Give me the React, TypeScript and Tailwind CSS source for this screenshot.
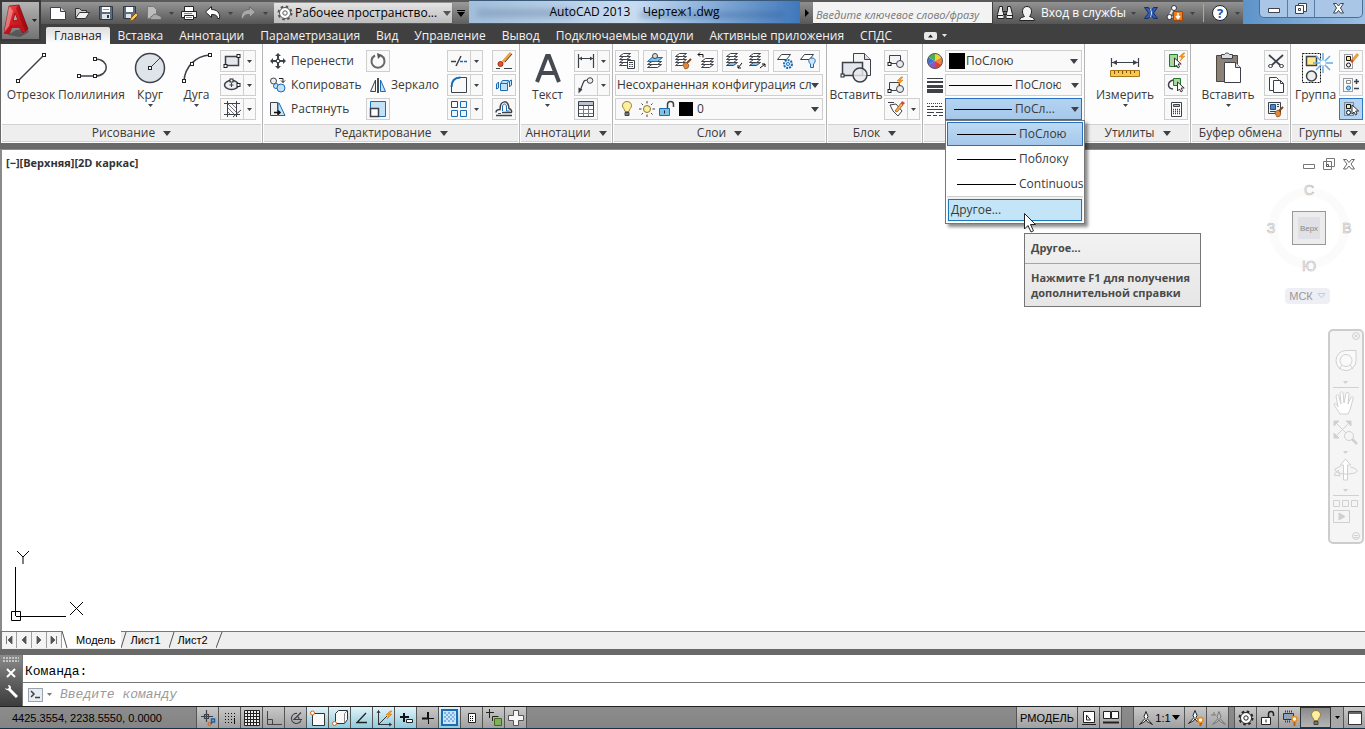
import React, { useState } from "react";

const INK = "#3d4149";
const BLUE = "#1a6cb5";
const SKY = "#c3e2f5";

type Kids = { children?: React.ReactNode };

function Icon({ w = 18, h, children }: Kids & { w?: number; h?: number }) {
  return (
    <svg
      width={w}
      height={h ?? w}
      viewBox={`0 0 ${w} ${h ?? w}`}
      fill="none"
      stroke={INK}
      strokeWidth="1"
      aria-hidden="true"
      className="shrink-0"
    >
      {children}
    </svg>
  );
}

function Arrow({ big, color = "#3d4149" }: { big?: boolean; color?: string }) {
  return big ? (
    <svg width="8" height="5" viewBox="0 0 8 5" className="shrink-0" aria-hidden="true">
      <path d="M0 0h8L4 5z" fill={color} />
    </svg>
  ) : (
    <svg width="5" height="3" viewBox="0 0 5 3" className="shrink-0" aria-hidden="true">
      <path d="M0 0h5L2.500 3z" fill={color} />
    </svg>
  );
}

function Node({ x, y }: { x: number; y: number }) {
  return <rect x={x - 1.5} y={y - 1.5} width="3" height="3" fill="#fff" stroke="#222" />;
}

/* ---------- ribbon building blocks ---------- */

function Panel({ title, width, children, arrow = true }: Kids & { title: string; width: string; arrow?: boolean }) {
  return (
    <section className={`flex shrink-0 flex-col border-r border-[#b4b4b4] pr-px pl-px ${width}`}>
      <div className="flex h-20 pt-[6px]">{children}</div>
      <div className="mb-px flex h-[18px] items-center justify-center gap-2 border-t border-b border-[#d2d2d2] bg-[#eeeeee]">
        <span>{title}</span>
        {arrow && title && <Arrow big />}
      </div>
    </section>
  );
}

function Big({ label, width, arrow, children }: Kids & { label: string; width: string; arrow?: boolean }) {
  return (
    <button className={`flex shrink-0 flex-col items-center ${width}`}>
      <span className="flex h-9 items-center">{children}</span>
      <span className="h-[18px] leading-[18px]">{label}</span>
      {arrow && <Arrow />}
    </button>
  );
}

function Tool({ label, on, children }: Kids & { label: string; on?: boolean }) {
  return (
    <button
      aria-label={label}
      className={`flex h-[22px] w-6 shrink-0 items-center justify-center border ${
        on ? "border-[#2f7ac8] bg-[#b5d5f3]" : "border-[#cfcfcf] bg-[#f9f9f9]"
      }`}
    >
      {children}
    </button>
  );
}

function Split({ label, children }: Kids & { label: string }) {
  return (
    <div className="flex h-[22px] shrink-0">
      <Tool label={label}>{children}</Tool>
      <button
        aria-label={`${label} ▾`}
        className="flex w-3 items-center justify-center border border-l-0 border-[#cfcfcf] bg-[#f9f9f9]"
      >
        <Arrow />
      </button>
    </div>
  );
}

function Pair({ children }: Kids) {
  return <div className="flex h-[22px] w-[47px] items-center justify-around border border-[#cfcfcf] bg-[#f9f9f9]">{children}</div>;
}

function Flat({ label, children }: Kids & { label: string }) {
  return (
    <button aria-label={label} className="flex items-center justify-center">
      {children}
    </button>
  );
}

function Row({ label, children }: Kids & { label: string }) {
  return (
    <button className="flex h-[22px] items-center gap-[5px] whitespace-nowrap">
      {children}
      <span>{label}</span>
    </button>
  );
}

function Stack({ children, className = "" }: Kids & { className?: string }) {
  return <div className={`flex shrink-0 flex-col gap-[2px] ${className}`}>{children}</div>;
}

/* ---------- small drawings ---------- */

function Layers({ tint = "#fff" }: { tint?: string }) {
  return (
    <>
      <path d="M1.500 13.500h7l4-3h-7z" fill={tint} />
      <path d="M1.500 10.500h7l4-3h-7z" fill="#fff" />
      <path d="M1.500 7.500h7l4-3h-7z" fill="#fff" />
      <path d="M1.500 4.500h7l4-3h-7z" fill="#fff" />
    </>
  );
}

function Bolt({ x, y }: { x: number; y: number }) {
  return <path d={`M${x + 4} ${y}l-4 4h3l-2 4 5-5h-3l3-3z`} fill="#f8a21c" stroke="#d96f0a" strokeWidth=".5" />;
}

function Brush({ x, y }: { x: number; y: number }) {
  return (
    <>
      <path d={`M${x + 8} ${y}l-4 4`} stroke="#7b4a22" strokeWidth="2" />
      <path d={`M${x} ${y + 5}l3-2 3 3-1 3-3 1c-1-2-2-3-2-5z`} fill="#e2873a" stroke="#8a4512" strokeWidth=".7" />
    </>
  );
}

function Pointer({ x, y }: { x: number; y: number }) {
  return <path d={`M${x} ${y}v9l2-2 1.500 3 1.500-1-1.300-3h3z`} fill="#fff" stroke="#222" strokeWidth=".9" />;
}

function Bulb({ x, y }: { x: number; y: number }) {
  return (
    <>
      <path
        d={`M${x + 5} ${y}c-3 0-4.500 2-4.500 4.300 0 2.200 2.300 3.200 2.500 5.700h4c.2-2.500 2.500-3.500 2.500-5.700C${x + 9.5} ${y + 2} ${x + 8} ${y} ${x + 5} ${y}z`}
        fill="#ffefa0"
        stroke="#98803a"
      />
      <path d={`M${x + 3} ${y + 11}h4v3h-4z`} fill="#777" stroke="#444" />
    </>
  );
}

function Gear({ color = "#3d4149", fill = "none" }: { color?: string; fill?: string }) {
  return (
    <>
      <circle cx="8" cy="8" r="6.500" stroke={color} strokeWidth="2" strokeDasharray="2.550 2.550" />
      <circle cx="8" cy="8" r="5.500" fill={fill} stroke={color} />
      <circle cx="8" cy="8" r="2.200" stroke={color} />
    </>
  );
}

function Logo() {
  return (
    <svg width="25" height="33" viewBox="0 0 25 33" className="shrink-0" aria-hidden="true">
      <defs>
        <linearGradient id="logoRed" x1="0" y1="0" x2="1" y2="1">
          <stop offset="0" stopColor="#f06a6a" />
          <stop offset=".4" stopColor="#dd1f26" />
          <stop offset="1" stopColor="#a50912" />
        </linearGradient>
      </defs>
      <path d="M4 31l8-5 11-1 2 3-9 5z" fill="#333" opacity=".5" />
      <path d="M5 2L15 1l9 24-5 4-4-7-7 1-3 7-5-1z" fill="url(#logoRed)" stroke="#7d0910" strokeWidth=".7" />
      <path d="M5 2l4 5-4 15-5 7z" fill="#f3b4b4" opacity=".55" />
      <path d="M11 9l3 7-5 1z" fill="#b9a6a6" stroke="#8c0d14" strokeWidth=".8" />
      <path d="M0 29l7-8 13 1 4 3-5 4-4-5-8 0-2 6z" fill="#c4121b" />
      <path d="M15 1l9 24-3 2L12 4z" fill="#8f0710" opacity=".55" />
    </svg>
  );
}

/* ---------- title bar ---------- */

function QuickAccess() {
  const cell = "flex h-6 w-6 shrink-0 items-center justify-center";
  const drop = "flex h-6 w-[11px] shrink-0 items-center justify-center";
  return (
    <div className="flex h-6 w-[428px] shrink-0 items-center border-t-2 border-[#5a5a5a] bg-gradient-to-b from-[#959595] to-[#565656] pl-[5px]">
      <button aria-label="Создать" className={cell}>
        <Icon w={18}>
          <path d="M1.500 3.500h10l5 4v8h-15z" fill="#fff" />
          <path d="M11.500 3.500v4h5" fill="#ddd" />
        </Icon>
      </button>
      <button aria-label="Открыть" className={cell}>
        <Icon w={18}>
          <path d="M2.500 14.500v-10h4l2 2h5v2" fill="#cfcfcf" stroke="#333" />
          <path d="M2.500 14.500l4-6h10l-4 6z" fill="#f1f1f1" stroke="#333" />
        </Icon>
      </button>
      <button aria-label="Сохранить" className={cell}>
        <Icon w={16}>
          <path d="M1.500 1.500h13v13h-13z" fill="#5d6b7a" stroke="#2e3a46" />
          <path d="M4 2h8v5H4z" fill="#fff" stroke="none" />
          <path d="M4 9h8v5H4z" fill="#dfe4e8" stroke="none" />
          <path d="M5 4.500h6" stroke="#8a97a5" />
          <path d="M9 10h2v3H9z" fill="#2e3a46" stroke="none" />
        </Icon>
      </button>
      <button aria-label="Сохранить как" className={cell}>
        <Icon w={18}>
          <path d="M2.500 2.500h12v12h-12z" fill="#5d6b7a" stroke="#2e3a46" />
          <path d="M5 3h7v5H5z" fill="#fff" stroke="none" />
          <path d="M5 10h5v4H5z" fill="#dfe4e8" stroke="none" />
          <path d="M9 17l1-3 5-5 2 2-5 5z" fill="#ffc85a" stroke="#8a5a16" />
        </Icon>
      </button>
      <button aria-label="Облако" className={cell}>
        <Icon w={18}>
          <path d="M2.500 2.500h6l3 3v9h-9z" fill="#bdbdbd" stroke="#777" />
          <path d="M6 15.500h10c1-3-1-4-3-4-1-2-5-2-6 1-2 0-2 2-1 3z" fill="#a9a9a9" stroke="#6d6d6d" />
        </Icon>
      </button>
      <span className={drop}>
        <Arrow />
      </span>
      <button aria-label="Печать" className={cell}>
        <Icon w={18}>
          <path d="M4.500 7V2.500h9V7" fill="#fff" stroke="#222" />
          <path d="M1.500 7.500h15v6h-15z" fill="#f1f1f1" stroke="#222" />
          <path d="M4.500 11.500h9v4h-9z" fill="#fff" stroke="#222" />
          <path d="M4 9.500h8M6 13.500h6" stroke="#888" />
        </Icon>
      </button>
      <button aria-label="Отменить" className={cell}>
        <Icon w={18}>
          <path d="M7.500 2.500v3c5 0 9 3 8 9h-2c0-3-2-4-6-4v3l-6-5.500z" fill="#fff" stroke="#222" />
        </Icon>
      </button>
      <span className={drop}>
        <Arrow />
      </span>
      <button aria-label="Повторить" className={cell}>
        <Icon w={18}>
          <path d="M10.500 2.500v3c-5 0-9 3-8 9h2c0-3 2-4 6-4v3l6-5.500z" fill="#a8a8a8" stroke="#6b6b6b" />
        </Icon>
      </button>
      <span className={drop}>
        <Arrow />
      </span>
      <div className="relative ml-[3px] flex h-5 w-[178px] items-center bg-gradient-to-b from-[#e4e4e4] to-[#bdbdbd] pl-[3px]">
        <Icon w={16}>
          <Gear color="#555" fill="#fff" />
        </Icon>
        <select
          aria-label="Рабочее пространство"
          className="h-5 flex-1 appearance-none bg-transparent pl-[2px] leading-5 text-black outline-none"
        >
          <option>Рабочее пространство...</option>
        </select>
        <span className="pointer-events-none absolute right-px">
          <Arrow big color="#555" />
        </span>
      </div>
      <button
        aria-label="Настройка панели"
        className="ml-px flex h-[22px] w-4 flex-col items-center justify-center gap-px bg-gradient-to-b from-[#9a9a9a] to-[#5f5f5f]"
      >
        <span className="h-px w-2 bg-black" />
        <Arrow big color="#000" />
      </button>
    </div>
  );
}

function InfoCenter() {
  return (
    <div className="flex h-6 shrink-0 border-t-2 border-[#5a5a5a]">
      <button
        aria-label="Свернуть поиск"
        className="flex w-[13px] items-center justify-center bg-gradient-to-b from-[#8f8f8f] to-[#585858]"
      >
        <svg width="4" height="8" viewBox="0 0 4 8" aria-hidden="true">
          <path d="M0 0v8l4-4z" />
        </svg>
      </button>
      <input
        aria-label="Поиск"
        placeholder="Введите ключевое слово/фразу"
        className="h-[21px] w-[179px] bg-[#f3f3f3] pt-[3px] pl-[3px] text-[11px] italic outline-none placeholder:text-[#777]"
      />
      <div className="ml-px flex w-[250px] items-center bg-gradient-to-b from-[#939393] to-[#555] pl-[3px] whitespace-nowrap">
        <button aria-label="Найти">
          <Icon w={18}>
            <path d="M3.500 2.500h3v4l1.500 4v4H1.500v-4zM11.500 2.500h3l2 8v4H10v-4l1.500-4z" fill="#eee" stroke="#222" />
            <path d="M7 7.500h4M7 10.500h4M2 11.500h5M11 11.500h5" stroke="#222" />
          </Icon>
        </button>
        <button className="ml-1 flex items-center gap-[5px] text-white">
          <Icon w={18}>
            <path d="M1.500 16.500c0-3 3-3 5-4-3-3-3-10 2.500-10s5.500 7 2.500 10c2 1 5 1 5 4z" fill="#f4f4f4" stroke="#222" />
          </Icon>
          <span>Вход в службы</span>
          <Arrow />
        </button>
        <button aria-label="Exchange" className="ml-[6px]">
          <Icon w={18}>
            <path d="M2.500 3.500h4l2.500 4 2.500-4h4l-4 5.500 4 5.500h-4l-2.500-4-2.500 4h-4l4-5.500z" fill="#2f5db8" stroke="#12306d" />
            <path d="M8 5c2 2 2 6 0 8" stroke="#dfe9fb" />
          </Icon>
        </button>
        <button aria-label="Обновления" className="ml-[6px] flex items-center gap-[6px]">
          <Icon w={18}>
            <path d="M8 3L3 13h7" stroke="#e8e8e8" strokeWidth="2" />
            <circle cx="8" cy="4" r="2.500" fill="#fff" stroke="#334" />
            <circle cx="3.500" cy="13" r="2.500" fill="#fff" stroke="#334" />
            <path d="M7.500 7.500h9v9h-9z" fill="#ee7d1b" stroke="#9c470a" />
            <path d="M12 9v5m-2-2l2 2.500 2-2.500" stroke="#fff" strokeWidth="1.500" />
          </Icon>
          <Arrow />
        </button>
        <span className="ml-2 h-[18px] w-px bg-[#aaa]" />
        <button aria-label="Справка" className="ml-2 flex items-center gap-[7px]">
          <span className="flex h-4 w-4 items-center justify-center rounded-full border border-[#223] bg-white text-[13px] font-bold text-[#1f4fae]">
            ?
          </span>
          <Arrow />
        </button>
      </div>
    </div>
  );
}

function WindowButtons() {
  return (
    <div className="flex h-6 w-[122px] shrink-0 items-start bg-gradient-to-r from-[#5c93c9] to-[#9dc0e4] pl-4">
      <div className="flex h-[18px] w-[104px] rounded-b-[5px] border border-t-0 border-[#4d6e94] bg-[#a9c6e6]">
        <button aria-label="Свернуть" className="flex w-7 items-center justify-center border-r border-[#5a7ca3]">
          <Icon w={14} h={8}>
            <path d="M1.500 3.500h11v4h-11z" fill="#fff" />
          </Icon>
        </button>
        <button aria-label="Восстановить" className="flex w-[27px] items-center justify-center border-r border-[#5a7ca3]">
          <Icon w={14} h={14}>
            <path d="M4.500 1.500h8v8h-8z" fill="#fff" />
            <path d="M1.500 3.500h8v8h-8z" fill="#fff" />
            <path d="M4.500 6.500h2v2h-2z" />
          </Icon>
        </button>
        <button aria-label="Закрыть" className="flex flex-1 items-center justify-center">
          <Icon w={13} h={13}>
            <path d="M1.500 1.500h3l2 2.500 2-2.500h3L8.500 6l3 5h-3l-2-2.500-2 2.500h-3l3-5z" fill="#fff" />
          </Icon>
        </button>
      </div>
    </div>
  );
}

const TABS = [
  "Вставка",
  "Аннотации",
  "Параметризация",
  "Вид",
  "Управление",
  "Вывод",
  "Подключаемые модули",
  "Активные приложения",
  "СПДС",
];

function Header() {
  return (
    <header className="flex shrink-0 bg-[#404040]">
      <button
        aria-label="Меню приложения"
        className="flex h-[41px] w-[41px] shrink-0 items-center gap-[3px] border-2 border-[#3a3a3a] bg-gradient-to-b from-[#b5b5b5] to-[#737373] pl-[2px]"
      >
        <Logo />
        <Arrow color="#222" />
      </button>
      <div className="flex min-w-0 flex-1 flex-col">
        <div className="flex">
          <QuickAccess />
          <div className="relative flex h-6 min-w-0 flex-1 items-center justify-center overflow-hidden border-t border-b border-[#3a5878] bg-gradient-to-r from-[#a3bfdc] via-[#c8dcf0] to-[#3f78bb]">
            <div className="absolute top-2 left-2 h-2 w-24 bg-[#6f8aa8] opacity-50 blur-[3px]" />
            <div className="absolute top-3 right-4 h-1 w-36 bg-[#2b568c] opacity-50 blur-[3px]" />
            <h1 className="relative whitespace-pre text-black">{"AutoCAD 2013    Чертеж1.dwg"}</h1>
          </div>
          <InfoCenter />
          <WindowButtons />
        </div>
        <nav className="flex h-5 items-end pl-[5px] text-[#f2f2f2]">
          <button className="h-[17px] rounded-t-[2px] bg-gradient-to-b from-[#dcdcdc] to-white px-2 leading-[14px] text-[#222]">
            Главная
          </button>
          {TABS.map((t) => (
            <button key={t} className="h-[17px] px-2 leading-[14px] whitespace-nowrap">
              {t}
            </button>
          ))}
          <button aria-label="Свернуть ленту" className="ml-6 flex h-[17px] items-center gap-[5px]">
            <Icon w={13} h={8}>
              <rect x="0" y="0" width="13" height="8" rx="2" fill="#e8e8e8" stroke="none" />
              <path d="M4 5.500h5L6.500 2.500z" fill="#222" stroke="none" />
            </Icon>
            <Arrow color="#e8e8e8" />
          </button>
        </nav>
      </div>
    </header>
  );
}

/* ---------- ribbon panels ---------- */

function DrawPanel() {
  return (
    <Panel title="Рисование" width="w-[262px]">
      <div className="flex pl-1">
        <Big label="Отрезок" width="w-[50px]">
          <Icon w={32}>
            <path d="M3 29L29 3" strokeWidth="1.500" />
            <Node x={3} y={29} />
            <Node x={29} y={3} />
          </Icon>
        </Big>
        <Big label="Полилиния" width="w-[71px]">
          <Icon w={32}>
            <path d="M3 24h16c15 0 15-17 0-17" strokeWidth="1.500" />
            <Node x={3} y={24} />
            <Node x={19} y={24} />
            <Node x={19} y={7} />
          </Icon>
        </Big>
        <Big label="Круг" width="w-[46px]" arrow>
          <Icon w={32}>
            <circle cx="16" cy="16" r="14.500" fill="#dfe3ea" strokeWidth="1.500" />
            <path d="M16 16l10-10" />
            <Node x={16} y={16} />
          </Icon>
        </Big>
        <Big label="Дуга" width="w-[47px]" arrow>
          <Icon w={32}>
            <path d="M3 29C4 15 14 4 29 3" strokeWidth="1.500" />
            <Node x={3} y={29} />
            <Node x={11} y={12} />
            <Node x={29} y={3} />
          </Icon>
        </Big>
      </div>
      <Stack>
        <Split label="Прямоугольник">
          <Icon>
            <path d="M2.500 4.500h13v9h-13z" fill="#e4e7ec" strokeWidth="1.500" />
            <Node x={2.5} y={14} />
            <Node x={15.5} y={4} />
          </Icon>
        </Split>
        <Split label="Эллипс">
          <Icon>
            <ellipse cx="8.500" cy="9" rx="7" ry="4.500" fill="#eceef2" strokeWidth="1.500" />
            <path d="M6.500 9h4M8.500 7v4" />
            <Node x={15.5} y={9} />
            <Node x={8.5} y={4.5} />
          </Icon>
        </Split>
        <Split label="Штриховка">
          <Icon>
            <path d="M4.500 1v16M13.500 1v16M1 3.500h16M1 14.500h16" />
            <path d="M5 8l6 6M5 4l9 9M9 4l5 5M5 12l2 2" strokeWidth=".7" />
            <path d="M10 17l8-7" />
          </Icon>
        </Split>
      </Stack>
    </Panel>
  );
}

function ModifyPanel() {
  return (
    <Panel title="Редактирование" width="w-[257px]">
      <Stack className="w-[102px] pl-[6px]">
        <Row label="Перенести">
          <Icon w={16}>
            <path d="M8 2v4M8 10v4M2 8h4M10 8h4" strokeWidth="2" />
            <path d="M8 0l3 3H5zM8 16l3-3H5zM0 8l3-3v6zM16 8l-3-3v6z" fill={INK} stroke="none" />
            <path d="M6.500 6.500h3v3h-3z" fill="#fff" />
          </Icon>
        </Row>
        <Row label="Копировать">
          <Icon w={16}>
            <circle cx="3.500" cy="4" r="3" fill="#eee" />
            <circle cx="6" cy="9" r="2.500" fill={SKY} stroke={BLUE} />
            <circle cx="11" cy="11" r="4" fill={SKY} stroke={BLUE} />
            <path d="M9 1.500h4v4m-2-2l2 2 2-2" stroke="#222" />
          </Icon>
        </Row>
        <Row label="Растянуть">
          <Icon w={16}>
            <path d="M.5 1.500h7v13h-7z" fill="#f0f0f0" />
            <path d="M9 2l6 12.500H8V2z" fill={SKY} stroke={BLUE} />
            <path d="M4 11.500h6m-2-2l2 2-2 2" stroke="#111" strokeWidth="1.500" />
          </Icon>
        </Row>
      </Stack>
      <Stack className="w-[81px]">
        <Tool label="Повернуть">
          <Icon>
            <path d="M6 3.500a6.500 6.500 0 1 0 6 0" strokeWidth="2" stroke="#666" />
            <path d="M8 1l5 2-4 4z" fill="#555" stroke="none" />
          </Icon>
        </Tool>
        <div className="pl-1">
          <Row label="Зеркало">
            <Icon w={16}>
              <path d="M5.500 3v11.500H.5z" fill="#f2f2f2" />
              <path d="M10.500 3v11.500h5z" fill={SKY} stroke={BLUE} />
              <path d="M8 1v15" stroke="#111" strokeWidth="1.500" />
            </Icon>
          </Row>
        </div>
        <Tool label="Масштаб">
          <Icon>
            <path d="M1.500 1.500h15v15h-15z" fill={SKY} stroke={BLUE} />
            <path d="M1.500 8.500h8v8h-8z" fill="#fff" strokeWidth="1.500" />
          </Icon>
        </Tool>
      </Stack>
      <Stack className="w-[45px]">
        <Split label="Обрезать">
          <Icon>
            <path d="M1 9.500h5M6 14L11 4" strokeWidth="1.500" />
            <path d="M10 9.500h8" stroke={BLUE} strokeDasharray="3 1" strokeWidth="1.500" />
          </Icon>
        </Split>
        <Split label="Сопряжение">
          <Icon>
            <path d="M1.500 16.500V10M9 1.500h7.500v15h-15" />
            <path d="M1.500 11c0-6 3-9.500 9-9.500" stroke={BLUE} strokeWidth="2" />
          </Icon>
        </Split>
        <Split label="Массив">
          <Icon>
            <path d="M1.500 1.500h6v6h-6z" />
            <path d="M10.500 1.500h6v6h-6zM1.500 10.500h6v6h-6zM10.500 10.500h6v6h-6z" stroke={BLUE} fill="#eaf4fb" />
          </Icon>
        </Split>
      </Stack>
      <Stack>
        <Tool label="Стереть">
          <Icon>
            <path d="M16 1L8 10" stroke="#e8a04a" strokeWidth="3" />
            <path d="M17 2l-7 8" stroke="#444" />
            <circle cx="5.500" cy="12" r="2.500" fill="#e2552c" stroke="#a02d10" />
            <path d="M1 16.500h4M9 16.500h8" />
          </Icon>
        </Tool>
        <Tool label="Расчленить">
          <Icon>
            <path d="M5.500 7.500h7v7h-7zM5.500 7.500l2-3h6l-1 3M3.500 6l-2 2v5l2-1zM14.500 5l2-1v5l-2 2z" fill={SKY} stroke={BLUE} />
          </Icon>
        </Tool>
        <Tool label="Подобие">
          <Icon>
            <path d="M1 15.500h16M1 12.500c0-3 2-3 4-3 0-10 9-10 9-1 3 1 3 4 2 4H7" strokeWidth="1.500" />
            <path d="M3 13.500h3M7.500 11V7c0-4 4-4 4 0v4h3" stroke={BLUE} />
          </Icon>
        </Tool>
      </Stack>
    </Panel>
  );
}

function AnnotationPanel() {
  return (
    <Panel title="Аннотации" width="w-[93px]">
      <Big label="Текст" width="w-[53px]" arrow>
        <Icon w={30} h={32}>
          <path d="M4 30L14 4h2l10 26M8 21h14" stroke="#454951" strokeWidth="4" />
        </Icon>
      </Big>
      <Stack>
        <Split label="Размер">
          <Icon>
            <path d="M1.500 2v14M16.500 2v14M2 6.500h14" strokeWidth="1.200" />
            <path d="M2 6.500l3-2v4zM16 6.500l-3-2v4z" fill={INK} stroke="none" />
          </Icon>
        </Split>
        <Split label="Выноска">
          <Icon>
            <path d="M3 15L6.500 6c.5-1.500 2-2 4-2" strokeWidth="1.200" />
            <path d="M1.500 17.500v-6l4 2z" fill={INK} stroke="none" />
            <circle cx="13" cy="4.500" r="2.800" fill="#eee" />
          </Icon>
        </Split>
        <Tool label="Таблица">
          <Icon>
            <path d="M1.500 1.500h15v15h-15z" fill="#fff" />
            <path d="M2 2h14v3H2z" fill="#b9c2cd" stroke="none" />
            <path d="M1.500 5.500h15" />
            <path d="M2 9.500h14M2 13.500h14M6.500 6v10M11.500 6v10" stroke="#777b82" />
          </Icon>
        </Tool>
      </Stack>
    </Panel>
  );
}

function LayersPanel() {
  return (
    <Panel title="Слои" width="w-[214px]">
      <Stack className="flex-1 pl-px">
        <div className="flex h-[22px] gap-1">
          <Tool label="Диспетчер слоев">
            <Icon>
              <Layers />
              <path d="M9.500 8.500h7v8h-7z" fill="#fff" />
              <path d="M11 10.500h4" />
              <path d="M11 12.500h4M11 14.500h4" strokeDasharray="1 .5" />
            </Icon>
          </Tool>
          <Tool label="Сделать текущим">
            <Icon>
              <path d="M1.500 15.500h10l4-3H6z" fill="#fff" />
              <path d="M1.500 12.500h10l4-3H6z" fill="#fff" />
              <path d="M1.500 9.500h10l5-4H6z" fill="#7fc0ec" stroke={BLUE} />
              <circle cx="9" cy="4" r="2.500" fill="#ddd" />
            </Icon>
          </Tool>
          <Pair>
            <Flat label="Копировать слой">
              <Icon>
                <Layers />
                <Brush x={9} y={7} />
              </Icon>
            </Flat>
            <Flat label="Предыдущий слой">
              <Icon>
                <path d="M4.500 15.500h8l4-3h-8z" fill="#fff" />
                <path d="M4.500 12.500h8l4-3h-8z" fill="#fff" />
                <path d="M4.500 9.500h8l4-3h-8z" fill="#fff" />
                <path d="M1 2.500h5v3M3 .5l-2 2 2 2" stroke="#111" />
              </Icon>
            </Flat>
          </Pair>
          <Pair>
            <Flat label="Изолировать">
              <Icon>
                <Layers tint="#7fc0ec" />
                <path d="M17 11l-4 5m0-3v3h3" stroke="#111" />
              </Icon>
            </Flat>
            <Flat label="Отменить изоляцию">
              <Icon>
                <Layers tint="#7fc0ec" />
                <path d="M12 16l5-4m-3 0h3v3" stroke="#111" />
              </Icon>
            </Flat>
          </Pair>
          <Pair>
            <Flat label="Заморозить">
              <Icon>
                <path d="M1.500 7.500h9l4-5h-9z" fill="#fff" />
                <circle cx="12" cy="12" r="4" fill="#dceefa" stroke={BLUE} strokeWidth="2" strokeDasharray="2 1" />
                <circle cx="12" cy="12" r="1.500" fill="#fff" stroke={BLUE} />
              </Icon>
            </Flat>
            <Flat label="Отключить">
              <Icon>
                <path d="M1.500 7.500h9l4-5h-9z" fill="#fff" />
                <path d="M13 6c-4 0-4 4-1.500 6v3.500h3V12C17 10 17 6 13 6z" fill="#cfe5f7" stroke={BLUE} />
              </Icon>
            </Flat>
          </Pair>
        </div>
        <div className="relative flex h-[22px] w-[208px] items-center border border-[#cfcfcf] bg-[#f9f9f9]">
          <select
            aria-label="Конфигурация слоев"
            className="h-5 w-[196px] appearance-none bg-transparent pl-px leading-5 [text-overflow:clip] outline-none"
          >
            <option>Несохраненная конфигурация сло</option>
          </select>
          <span className="pointer-events-none absolute right-[3px]">
            <Arrow big />
          </span>
        </div>
        <div className="relative flex h-[22px] w-[208px] items-center gap-[2px] border border-[#cfcfcf] bg-[#f9f9f9] pl-[3px]">
          <Icon w={17} h={18}>
            <Bulb x={3} y={1.5} />
          </Icon>
          <Icon w={18}>
            <circle cx="9" cy="9" r="3.500" fill="#fff0a0" stroke="#8a7430" />
            <path d="M9 1v2.500M9 14.500V17M1 9h2.500M14.500 9H17M3.500 3.500l1.500 1.500M13 13l1.500 1.500M14.500 3.500L13 5M5 13l-1.500 1.500" />
          </Icon>
          <Icon w={18}>
            <path d="M9.500 8V4.500c0-4 6-4 6 0V7" strokeWidth="1.500" />
            <path d="M1.500 8.500h10v7h-10z" fill="#7cc3ea" stroke={BLUE} />
            <path d="M6.500 10.500v3" stroke="#222" />
          </Icon>
          <span className="ml-px h-[14px] w-[14px] bg-black" />
          <select aria-label="Слой" className="h-5 flex-1 appearance-none bg-transparent pl-[2px] leading-5 outline-none">
            <option>0</option>
          </select>
          <span className="pointer-events-none absolute right-[3px]">
            <Arrow big />
          </span>
        </div>
      </Stack>
    </Panel>
  );
}

function BlockPanel() {
  return (
    <Panel title="Блок" width="w-24">
      <Big label="Вставить" width="w-14">
        <Icon w={32}>
          <path d="M13.500 1.500h11l6 6v16h-17z" fill="#f4f5f7" />
          <path d="M24.500 1.500v6h6" fill="#ddd" />
          <path d="M2.500 10.500h20v13h-20z" fill="#e3e6ec" strokeWidth="1.500" />
          <circle cx="20" cy="23" r="7" fill="#e8eaee" fillOpacity=".8" strokeWidth="1.500" />
          <Node x={2.5} y={23.5} />
        </Icon>
      </Big>
      <Stack>
        <Tool label="Создать блок">
          <Icon>
            <path d="M2.500 3.500h11v8h-11z" fill="#f2f3f5" />
            <circle cx="13" cy="12" r="3.500" fill="#e8eaee" />
            <Node x={2.5} y={12} />
          </Icon>
        </Tool>
        <Tool label="Редактор блоков">
          <Icon>
            <path d="M2.500 6.500h10v8h-10z" fill="#f2f3f5" />
            <circle cx="13" cy="13" r="3.500" fill="#e8eaee" />
            <Bolt x={10} y={1} />
            <Node x={2.5} y={15} />
          </Icon>
        </Tool>
        <Split label="Атрибуты">
          <Icon>
            <path d="M1 2.500h6M3 5l3 6 5 5 4-5-6-7z" fill="#fff" />
            <path d="M8 11l6-8 2 2-6 7z" fill="#f8b044" stroke="#8a4512" strokeWidth=".7" />
            <path d="M14 3l1-2 3 2-2 2z" fill="#d8452a" stroke="none" />
          </Icon>
        </Split>
      </Stack>
    </Panel>
  );
}

function LineSample({ width = 63 }: { width?: number }) {
  return (
    <svg width={width} height="1" className="shrink-0" aria-hidden="true">
      <rect width={width} height="1" fill="#000" />
    </svg>
  );
}

function PropertiesPanel() {
  const [linetype, setLinetype] = useState("ПоСлою");
  const combo = "relative flex h-[22px] items-center border pl-[3px]";
  return (
    <Panel title="" width="w-[162px]">
      <Stack className="w-[21px] items-center">
        <span className="flex h-[22px] items-center">
          <Icon w={16}>
            <path d="M8 8V.5A7.500 7.500 0 0 1 14.500 4.250z" fill="#f0d430" stroke="none" />
            <path d="M8 8l6.500-3.750a7.500 7.500 0 0 1 0 7.500z" fill="#f0823a" stroke="none" />
            <path d="M8 8l6.500 3.750A7.500 7.500 0 0 1 8 15.500z" fill="#dc4030" stroke="none" />
            <path d="M8 8v7.500a7.500 7.500 0 0 1-6.500-3.750z" fill="#8e55c4" stroke="none" />
            <path d="M8 8l-6.500 3.750a7.500 7.500 0 0 1 0-7.500z" fill="#4470d8" stroke="none" />
            <path d="M8 8L1.500 4.250A7.500 7.500 0 0 1 8 .5z" fill="#50b048" stroke="none" />
            <circle cx="8" cy="8" r="7.500" stroke="#555" />
          </Icon>
        </span>
        <span className="flex h-[22px] items-center">
          <Icon w={16}>
            <path d="M0 1.500h16" />
            <path d="M0 5h16" strokeWidth="2" />
            <path d="M0 9.500h16" strokeWidth="3" />
            <path d="M0 14h16" strokeWidth="4" />
          </Icon>
        </span>
        <span className="flex h-[22px] items-center">
          <Icon w={16}>
            <path d="M0 2.500h16" strokeDasharray="1 1" />
            <path d="M0 5.500h16" strokeDasharray="3 1" />
            <path d="M0 8.500h16" />
            <path d="M0 11.500h16" strokeDasharray="7 2" />
            <path d="M0 14.500h16" strokeDasharray="4 2" />
          </Icon>
        </span>
      </Stack>
      <Stack className="w-[137px]">
        <div className={`${combo} gap-px border-[#cfcfcf] bg-[#f9f9f9]`}>
          <span className="h-4 w-4 bg-black" />
          <select aria-label="Цвет" className="h-5 flex-1 appearance-none bg-transparent leading-5 outline-none">
            <option>ПоСлою</option>
          </select>
          <span className="pointer-events-none absolute right-[3px]">
            <Arrow big />
          </span>
        </div>
        <div className={`${combo} gap-[3px] border-[#cfcfcf] bg-[#f9f9f9]`}>
          <LineSample />
          <select aria-label="Вес линий" className="h-5 w-[46px] appearance-none bg-transparent leading-5 [text-overflow:clip] outline-none">
            <option>ПоСлою</option>
          </select>
          <span className="pointer-events-none absolute right-[2px]">
            <Arrow big />
          </span>
        </div>
        <div className={`${combo} gap-[3px] border-[#2671c0] bg-gradient-to-b from-[#b4d3f1] to-[#a5c8ea]`}>
          <span className="pl-[5px]">
            <LineSample width={58} />
          </span>
          <select aria-label="Тип линий" className="h-5 w-[46px] appearance-none bg-transparent leading-5 outline-none">
            <option>ПоСл...</option>
          </select>
          <span className="pointer-events-none absolute right-[2px]">
            <Arrow big />
          </span>
          <div className="absolute top-[21px] -left-px z-10 w-[140px] border border-[#777] bg-white p-px text-[#3a3a3a] shadow-[3px_3px_3px_rgba(0,0,0,0.45)]">
            <ul role="listbox" aria-label="Типы линий" className="flex flex-col gap-px">
              {["ПоСлою", "Поблоку", "Continuous"].map((name) => (
                <li key={name} role="option" aria-selected={name === linetype}>
                  <button
                    onClick={() => setLinetype(name)}
                    className={`flex h-6 w-full items-center gap-[3px] border pl-[9px] whitespace-nowrap ${
                      name === linetype
                        ? "border-[#2671c0] bg-gradient-to-b from-[#bdd9f4] to-[#a5c8ea]"
                        : "border-transparent"
                    }`}
                  >
                    <LineSample width={59} />
                    {name}
                  </button>
                </li>
              ))}
            </ul>
            <div className="border-t border-[#cfcfcf] bg-[#f1f1f1] p-px pt-[2px]">
              <button className="flex h-[22px] w-full items-center border border-[#1f78b8] bg-[#c3e5f7] pl-[2px]">
                Другое...
              </button>
            </div>
            <svg
              width="13"
              height="20"
              viewBox="0 0 13 20"
              className="absolute top-[92px] left-[78px] z-20"
              aria-hidden="true"
            >
              <path d="M.5.5v15.500l3.500-3.500 3 6.500 2.500-1.200-3-6.300h5z" fill="#fff" stroke="#222" />
            </svg>
            <div
              role="tooltip"
              className="absolute top-28 left-[78px] w-[177px] border border-[#767676] bg-gradient-to-b from-[#f2f2f2] to-[#e6e6e6] text-[11px] leading-[15px] font-bold text-[#4a4a4a]"
            >
              <p className="border-b border-[#a5a5a5] px-[6px] pt-[6px] pb-2">Другое...</p>
              <p className="px-[6px] pt-[6px] pb-[6px] whitespace-nowrap">
                Нажмите F1 для получения
                <br />
                дополнительной справки
              </p>
            </div>
          </div>
        </div>
      </Stack>
    </Panel>
  );
}

function UtilitiesPanel() {
  return (
    <Panel title="Утилиты" width="w-[106px]">
      <Big label="Измерить" width="w-[78px]" arrow>
        <Icon w={32}>
          <path d="M2.500 6v9M29.500 6v9M3 10.500h26" strokeWidth="1.200" />
          <path d="M3 10.500l5-2.500v5zM29 10.500l-5-2.500v5z" fill={INK} stroke="none" />
          <path d="M1.500 18.500h29v6h-29z" fill="#f9c74f" stroke="#a97614" />
          <path d="M5.500 19v3M9.500 19v2M13.500 19v3M17.500 19v2M21.500 19v3M25.500 19v2" stroke="#7c5208" />
        </Icon>
      </Big>
      <Stack>
        <Tool label="Быстрый выбор">
          <Icon>
            <path d="M2.500 2.500h8v12h-8z" fill="#a8d8a0" stroke="#1f7a2a" />
            <Bolt x={12} y={1} />
            <Pointer x={7.5} y={6} />
          </Icon>
        </Tool>
        <Tool label="Выбрать все">
          <Icon>
            <path d="M6 4c-6 2-6 8 0 9" strokeWidth="1.500" />
            <path d="M6.500 2.500h7v7h-7z" fill="#a8d8a0" stroke="#1f7a2a" />
            <Pointer x={10.5} y={6} />
          </Icon>
        </Tool>
        <Tool label="Калькулятор">
          <Icon>
            <path d="M4.500 2.500h10v14h-10z" fill="#fff" />
            <path d="M6.500 4.500h6v2h-6z" fill="#bbb" />
            <path d="M6 9.500h7M6 11.500h7M6 13.500h7" strokeDasharray="1 1" strokeWidth="1.500" />
          </Icon>
        </Tool>
      </Stack>
    </Panel>
  );
}

function ClipboardPanel() {
  return (
    <Panel title="Буфер обмена" width="w-[100px]" arrow={false}>
      <Big label="Вставить" width="w-[72px]" arrow>
        <Icon w={32}>
          <path d="M4.500 3.500h21v26h-21z" fill="#8b8177" stroke="#4d463f" />
          <path d="M9.500 6.500v-4h3c1-2 4-2 5 0h3v4z" fill="#ddd" />
          <path d="M12.500 10.500h11l5 5v15h-16z" fill="#fff" />
          <path d="M23.500 10.500v5h5" fill="#ddd" />
        </Icon>
      </Big>
      <Stack>
        <Tool label="Вырезать">
          <Icon>
            <path d="M2 3l11 10M16 3L5 13" strokeWidth="1.700" />
            <ellipse cx="3.500" cy="14" rx="2" ry="1.500" />
            <ellipse cx="14.500" cy="14" rx="2" ry="1.500" />
          </Icon>
        </Tool>
        <Tool label="Копировать в буфер">
          <Icon>
            <path d="M2.500 1.500h7l2 2v11h-9z" fill="#fff" />
            <path d="M6.500 4.500h7l3 3v9h-10z" fill="#fff" />
            <path d="M13.500 4.500v3h3" />
          </Icon>
        </Tool>
        <Tool label="Копирование свойств">
          <Icon>
            <path d="M1.500 2.500h12v11h-12z" fill="#eef3f8" />
            <path d="M3.500 4.500h5v5h-5z" fill="#4f86c0" stroke="#1d4c80" />
            <path d="M10 4.500h2M10 6.500h2M3 11.500h6" />
            <Brush x={8} y={7} />
          </Icon>
        </Tool>
      </Stack>
    </Panel>
  );
}

function GroupsPanel() {
  return (
    <section className="flex min-w-0 flex-1 flex-col overflow-hidden pl-px">
      <div className="flex h-20 pt-[6px]">
        <Big label="Группа" width="w-[47px]">
          <Icon w={34}>
            <path d="M3.500 2.500h18v29h-18z" strokeDasharray="2 1" stroke="#111" />
            <path d="M7.500 5.500h10v9h-10z" fill="#ffe98a" strokeWidth="1.500" />
            <circle cx="12.500" cy="25" r="5" fill="#eee" strokeWidth="1.500" />
            <path d="M24 2v20M14 12h20M17 5l14 14M31 5L17 19" stroke="#68abe4" strokeWidth="1.500" />
            <circle cx="24" cy="12" r="3" fill="#fff" stroke="#a9d3f3" />
          </Icon>
        </Big>
        <Stack>
          <Tool label="Разгруппировать">
            <Icon>
              <path d="M2.500 2.500h8v14h-8z" strokeDasharray="1 1" />
              <path d="M4.500 4.500h4v4h-4z" fill="#ffe98a" stroke="#111" />
              <circle cx="6.500" cy="13" r="2" stroke="#111" />
              <path d="M16 2l-5 6" stroke="#e8a04a" strokeWidth="3" />
              <path d="M11 8l-2 2" stroke="#d8452a" strokeWidth="3" />
            </Icon>
          </Tool>
          <Tool label="Редактировать группу">
            <Icon>
              <path d="M1.500 2.500h9v13h-9z" strokeDasharray="1 1" />
              <path d="M4.500 4.500h4v3h-4z" stroke="#888" />
              <circle cx="6.500" cy="12" r="2" fill="#9cd0f4" stroke={BLUE} />
              <path d="M12 5.500h5M14.500 3v5M12 12.500h5" strokeWidth="1.500" />
            </Icon>
          </Tool>
          <Tool label="Выбор группы" on>
            <Icon>
              <path d="M2.500 2.500h9v13h-9z" strokeDasharray="1 1" />
              <path d="M4.500 4.500h4v4h-4z" fill="#ffe98a" stroke="#111" />
              <circle cx="6.500" cy="12.500" r="2" fill="#fff" stroke="#111" />
              <Pointer x={10} y={5} />
            </Icon>
          </Tool>
        </Stack>
      </div>
      <div className="mb-px flex h-[18px] items-center justify-center gap-2 border-t border-b border-[#d2d2d2] bg-[#eeeeee]">
        <span>Группы</span>
        <Arrow big />
      </div>
    </section>
  );
}

function Ribbon() {
  return (
    <div className="flex shrink-0 border-b-[6px] border-l border-[#696969] bg-[#fdfdfd] text-[#3a3a3a]">
      <DrawPanel />
      <ModifyPanel />
      <AnnotationPanel />
      <LayersPanel />
      <BlockPanel />
      <PropertiesPanel />
      <UtilitiesPanel />
      <ClipboardPanel />
      <GroupsPanel />
    </div>
  );
}

/* ---------- drawing area ---------- */

function ViewCube() {
  return (
    <svg width="112" height="102" viewBox="0 0 112 102" className="font-['Liberation_Sans']" role="img" aria-label="Видовой куб">
      <circle cx="56" cy="50" r="36" fill="none" stroke="#fbfbfb" strokeWidth="9" />
      <g fill="#fff" stroke="#b9b9b9" strokeWidth=".6" fontSize="14" textAnchor="middle">
        <text x="56" y="17">С</text>
        <text x="18" y="55">З</text>
        <text x="94" y="55">В</text>
        <text x="56" y="93">Ю</text>
      </g>
      <rect x="39.500" y="33.500" width="33" height="33" fill="#ececec" stroke="#999" />
      <rect x="45" y="39" width="22" height="22" fill="#dfe1e6" />
      <text x="56" y="53" fontSize="8" fill="#888" textAnchor="middle">
        Верх
      </text>
    </svg>
  );
}

function NavBar() {
  return (
    <div className="mr-px flex h-[215px] w-9 flex-col items-center rounded-[5px] border-2 border-[#cdcdcd] bg-[#f5f5f5]">
      <svg width="30" height="211" viewBox="0 0 30 211" fill="none" stroke="#d0d0d0" aria-hidden="true">
        <circle cx="25" cy="5" r="3.500" />
        <path d="M23.500 3.500l3 3m0-3l-3 3" />
        <path d="M15 19.500h10v10a10 10 0 1 1-10-10z" fill="#fafafa" />
        <circle cx="15" cy="29.500" r="6" />
        <path d="M8 38l3-4M22 38l-3-4" />
        <path d="M2 56.500h26M2 164.500h26" />
        <path d="M12 50h5l-2.500 3zM12 120h5l-2.500 3zM12 158h5l-2.500 3z" fill="#d0d0d0" stroke="none" />
        <path
          d="M9 83c-2-4-5-7-6-10 1-1 3 0 4 3l-2-11c1-2 3-1 3 1l2 7-1-11c1-2 3-1 3 0l1 10 2-10c1-1 3-1 3 1l-1 10 3-7c1-1 3 0 2 2-2 6-2 10-5 15z"
          fill="#fff"
        />
        <path d="M4 91l15 15M19 91L4 106" />
        <path d="M3 90h5l-5 5zM20 90h-5l5 5zM3 107v-5l5 5z" fill="#d0d0d0" />
        <circle cx="18" cy="105" r="4.500" fill="#f5f5f5" />
        <path d="M21 108l5 5" strokeWidth="2.500" />
        <path d="M12.500 149v-15h-3l5-6 5 6h-3v15z" fill="#fff" />
        <path d="M19 136c10 2 10 7-4 7-6 0-12-2-11-5l6-3M7 139l-4 5 6 1z" />
        <path d="M2.500 169.500h6v6h-6zM11.500 169.500h6v6h-6zM20.500 169.500h6v6h-6zM2.500 179.500h16v12h-16z" />
        <path d="M8 182l6 3.500-6 3.500z" fill="#d0d0d0" />
        <circle cx="25" cy="205" r="3.500" />
        <path d="M23 204.500h4M23 206.500h4" />
      </svg>
    </div>
  );
}

function Canvas() {
  return (
    <main className="flex min-h-0 flex-1 justify-between border-t border-l-2 border-[#8a8a8a] bg-white">
      <div className="flex flex-col justify-between pt-[5px] pb-[9px] pl-1">
        <div className="text-[11px] leading-[15px] font-bold text-[#333]">[−][Верхняя][2D каркас]</div>
        <svg width="80" height="76" viewBox="0 0 80 76" fill="none" stroke="#000" aria-hidden="true">
          <path d="M5.500 65.500h9v9h-9zM9.500 70V21M10 70.500h50" />
          <path d="M11 5l6 6 6-6M17 11v7M64 56l13 13M77 56L64 69" />
        </svg>
      </div>
      <div className="flex w-28 flex-col items-end pt-[7px]">
        <div className="flex items-center gap-[6px] pr-[9px]">
          <button aria-label="Свернуть вид">
            <Icon w={14}>
              <path d="M1.500 7.500h11v4h-11z" fill="#fff" stroke="#777" />
            </Icon>
          </button>
          <button aria-label="Развернуть вид">
            <Icon w={14}>
              <path d="M4.500 1.500h8v8h-8zM1.500 4.500h8v8h-8z" fill="#fff" stroke="#777" />
              <path d="M4.500 7.500h2v2h-2z" stroke="#555" />
            </Icon>
          </button>
          <button aria-label="Закрыть вид">
            <Icon w={14}>
              <path d="M1.500 2.500h3l2.500 3 2.500-3h3L9 7l3.500 5h-3L7 9l-2.500 3h-3L5 7z" fill="#fff" stroke="#666" />
            </Icon>
          </button>
        </div>
        <div className="mt-[7px]">
          <ViewCube />
        </div>
        <button className="mt-2 mr-[35px] flex h-4 w-[45px] shrink-0 items-center justify-center gap-1 rounded-[4px] bg-[#eeeef5] font-['Liberation_Sans'] text-[11px] text-[#999]">
          МСК
          <svg width="9" height="6" viewBox="0 0 9 6" fill="none" stroke="#c4cede" aria-hidden="true">
            <path d="M1 .5h7L4.500 5z" />
          </svg>
        </button>
        <div className="mt-[25px]">
          <NavBar />
        </div>
      </div>
    </main>
  );
}

/* ---------- layout tabs, command line, status bar ---------- */

function LayoutTabs() {
  const nav = "flex h-4 w-[15px] items-center justify-center border-r border-[#a0a0a0] bg-[#f4f4f4]";
  const shapes = [
    { label: "В начало", d: "M1.500 0v8M7 0v8L3 4z" },
    { label: "Назад", d: "M6 0v8L2 4z" },
    { label: "Вперед", d: "M2 0v8l4-4z" },
    { label: "В конец", d: "M6.500 0v8M1 0v8l4-4z" },
  ];
  return (
    <div className="flex h-[18px] shrink-0 border-t border-l-2 border-[#777] bg-[#efefef] font-['Liberation_Sans'] text-[11px] text-black">
      {shapes.map((s) => (
        <button key={s.label} aria-label={s.label} className={nav}>
          <svg width="8" height="8" viewBox="0 0 8 8" fill="#555" stroke="#555" strokeWidth=".8" aria-hidden="true">
            <path d={s.d} />
          </svg>
        </button>
      ))}
      <button className="-mt-px flex h-[17px] items-center bg-white">
        <svg width="6" height="17" stroke="#555" aria-hidden="true">
          <path d="M0 0L5 17" />
        </svg>
        <span className="pr-[6px] pl-2">Модель</span>
      </button>
      {["Лист1", "Лист2"].map((t) => (
        <button key={t} className="flex h-4 items-center">
          <svg width="6" height="16" stroke="#555" aria-hidden="true">
            <path d="M0 16L5 0" />
          </svg>
          <span className="pr-2 pl-[3px]">{t}</span>
        </button>
      ))}
      <svg width="7" height="16" stroke="#555" aria-hidden="true">
        <path d="M0 16L6 0" />
      </svg>
    </div>
  );
}

function CommandLine() {
  return (
    <div className="flex shrink-0 border-t-[6px] border-[#696969] bg-white">
      <div className="flex w-[22px] flex-col items-center gap-[6px] bg-gradient-to-b from-[#8b8b8b] to-[#3c3c3c] pt-[2px]">
        <svg width="16" height="5" viewBox="0 0 16 5" stroke="#c4c4c4" strokeDasharray="2 1" aria-hidden="true">
          <path d="M0 1h16M0 4h16" strokeWidth="2" />
        </svg>
        <button aria-label="Закрыть">
          <Icon w={10} h={10}>
            <path d="M1 1l8 8M9 1L1 9" stroke="#fff" strokeWidth="2" />
          </Icon>
        </button>
        <button aria-label="Настройка">
          <Icon w={14} h={14}>
            <path d="M5 5l8 8" stroke="#fff" strokeWidth="3" />
            <path d="M1 4c1 3 5 3 6 0 0-2-1-3-3-3l1 3-2 1z" fill="#fff" stroke="none" />
          </Icon>
        </button>
      </div>
      <div className="flex min-w-0 flex-1 flex-col border-l border-[#777] font-['Liberation_Mono'] text-[13px]">
        <div className="h-7 border-b border-[#777] pt-2 pl-[2px] leading-[18px] text-black">Команда:</div>
        <label className="flex h-[23px] items-center pl-[5px]">
          <span className="flex h-[14px] w-[15px] items-center justify-center border border-[#9aa3ae] bg-[#e9ecf0]">
            <Icon w={11} h={9}>
              <path d="M1 1l3 3-3 3M5 7.500h5" strokeWidth="1.500" />
            </Icon>
          </span>
          <span className="ml-1">
            <Arrow color="#777" />
          </span>
          <input
            aria-label="Команда"
            placeholder="Введите команду"
            className="ml-2 h-5 flex-1 italic outline-none placeholder:text-[#9a9a9a]"
          />
        </label>
      </div>
    </div>
  );
}

function StatusButton({ label, on, children }: Kids & { label: string; on?: boolean }) {
  return (
    <button
      aria-label={label}
      className={`flex h-[21px] w-[22px] shrink-0 items-center justify-center border-l border-[#555] bg-gradient-to-b ${
        on ? "from-[#e2f4f9] to-[#8fcadb]" : "from-[#c9c9c9] to-[#a0a0a0]"
      }`}
    >
      {children}
    </button>
  );
}

function StatusBar() {
  return (
    <footer className="flex h-[23px] shrink-0 border-t border-b border-t-[#222] border-b-[#12354e] bg-gradient-to-b from-[#8c8c8c] to-[#848484] font-['Liberation_Sans'] text-[11px] text-black">
      <output className="w-[196px] pl-3 leading-[22px]">4425.3554, 2238.5550, 0.0000</output>
      <StatusButton label="Подразумевание зависимостей">
        <Icon w={18}>
          <path d="M7.500 1v12M2 7.500h12M5.500 5.500h4v4h-4z" strokeWidth="1.200" />
          <circle cx="10.500" cy="15" r="1.500" stroke="#d05a10" />
          <path d="M12.500 15v-5h3v3h-3" stroke="#1a5faa" strokeWidth="1.500" />
        </Icon>
      </StatusButton>
      <StatusButton label="Шаговая привязка">
        <Icon w={16}>
          <path d="M3 3.500h10M3 6.500h10M3 9.500h10M3 12.500h7" strokeDasharray="1 2" stroke="#111" />
          <path d="M12.500 8v6" stroke="#111" />
        </Icon>
      </StatusButton>
      <StatusButton label="Сетка">
        <Icon w={16}>
          <path
            d="M.5.500h15v15H.5zM3.500 0v16M6.500 0v16M9.500 0v16M12.500 0v16M0 3.500h16M0 6.500h16M0 9.500h16M0 12.500h16"
            fill="#eee"
            stroke="#222"
          />
        </Icon>
      </StatusButton>
      <StatusButton label="Орто">
        <Icon w={16}>
          <path d="M1.500 1v13.500H16M1.500 9.500h5v5" stroke="#444" />
        </Icon>
      </StatusButton>
      <StatusButton label="Полярное отслеживание">
        <Icon w={16}>
          <path d="M9 3.500a5 5 0 1 0 4 7M13 2.500l-7 7h8M9 6.500c2 0 2 2 2 3" strokeWidth="1.200" />
        </Icon>
      </StatusButton>
      <StatusButton label="Объектная привязка" on>
        <Icon w={18}>
          <path d="M3.500 4.500h12v12h-12z" fill="#fafafa" stroke="#333" />
          <circle cx="3.500" cy="4" r="2" fill="#fff" stroke="#e06010" />
        </Icon>
      </StatusButton>
      <StatusButton label="3D привязка" on>
        <Icon w={18}>
          <path d="M4.500 4.500l3-3h9v9l-3 4h-9z" fill="#fafafa" stroke="#333" />
          <path d="M13.500 14V4.500l3-3" stroke="#888" />
          <circle cx="3.500" cy="14.500" r="2" fill="#fff" stroke="#e06010" />
        </Icon>
      </StatusButton>
      <StatusButton label="Отслеживание" on>
        <Icon w={16}>
          <path d="M12 3L3 12.500h10" strokeWidth="1.300" stroke="#222" />
        </Icon>
      </StatusButton>
      <StatusButton label="Динамическая ПСК" on>
        <Icon w={18}>
          <path d="M3.500 2v13.500H16M3 16L12 7M2 4l1.500-2.500L5 4M14 14l2.500 1.500L14 17" stroke="#333" />
          <Bolt x={11} y={2} />
        </Icon>
      </StatusButton>
      <StatusButton label="Динамический ввод" on>
        <Icon w={16}>
          <path d="M6 3v9M2 7h9" stroke="#111" strokeWidth="2" />
          <path d="M8.500 9.500h6v3h-6z" fill="#fff" stroke="#222" />
        </Icon>
      </StatusButton>
      <StatusButton label="Вес линий">
        <Icon w={16}>
          <path d="M8.500 2v12M2 8.500h12" stroke="#111" />
          <path d="M8 2v7M2 8.500h6" stroke="#111" strokeWidth="2" />
        </Icon>
      </StatusButton>
      <StatusButton label="Прозрачность" on>
        <Icon w={17}>
          <path d="M1 1h15v15H1z" fill="#cfe3f7" stroke={BLUE} strokeWidth="2" />
          <path d="M3 4h11M3 8h11M3 12h11" stroke="#7fb2e0" strokeWidth="2" strokeDasharray="2 2" />
          <path d="M5 6h9M5 10h9" stroke="#7fb2e0" strokeWidth="2" strokeDasharray="2 2" />
        </Icon>
      </StatusButton>
      <StatusButton label="Быстрые свойства">
        <Icon w={16}>
          <path d="M4.500 3.500h7v9h-7z" fill="#fff" stroke="#222" />
          <path d="M6 6.500h4M6 8.500h4M6 10.500h4" strokeDasharray="1 1" stroke="#000" />
        </Icon>
      </StatusButton>
      <StatusButton label="Циклический выбор">
        <Icon w={18}>
          <path d="M4.500 0v9M1 3.500h8M7.500 12V7.500h6" stroke="#222" />
          <path d="M9.500 9.500h7v7h-7z" fill="#7db356" stroke="#3c6a22" />
        </Icon>
      </StatusButton>
      <StatusButton label="Монитор аннотаций">
        <Icon w={18}>
          <path d="M6.500 1.500h5v5h5v5h-5v5h-5v-5h-5v-5h5z" fill="#f6f6f6" stroke="#555" />
        </Icon>
      </StatusButton>
      <div className="flex-1 border-l border-[#555]" />
      <button className="h-[21px] w-[61px] border-l border-[#555] bg-gradient-to-b from-[#c9c9c9] to-[#a0a0a0] text-center leading-[22px]">
        РМОДЕЛЬ
      </button>
      <StatusButton label="Модель">
        <Icon w={16}>
          <path d="M2.500 1.500h11v11h-11z" fill="#fff" stroke="#222" />
          <path d="M5.500 10V5l4 5zM1 14.500h14" stroke="#222" />
        </Icon>
      </StatusButton>
      <StatusButton label="Просмотр листов">
        <Icon w={18}>
          <path d="M1.500 2.500h7v7h-7zM9.500 2.500h7v7h-7z" fill="#fff" stroke="#222" />
          <path d="M1 13.500h16" stroke="#222" strokeWidth="2" />
        </Icon>
      </StatusButton>
      <div className="w-3 border-l border-[#555]" />
      <button className="flex h-[21px] w-[51px] items-center justify-center gap-px border-l border-[#555] bg-gradient-to-b from-[#c9c9c9] to-[#a0a0a0]">
        <Icon w={16}>
          <path d="M8 1.500l2 5-1 2 5.500 6-5.500-3-1-2-1 2-5.500 3 5.500-6-1-2z" fill="#fff" stroke="#222" />
        </Icon>
        1:1
        <Arrow big color="#000" />
      </button>
      <StatusButton label="Видимость аннотаций">
        <Icon w={18}>
          <path d="M8 1.500l2 5-1 2 5.500 6-5.500-3-1-2-1 2-5.500 3 5.500-6-1-2z" fill="#fff" stroke="#222" />
          <circle cx="13.500" cy="11" r="2.500" fill="#fff" stroke="#f08a10" strokeWidth="1.500" />
          <path d="M13.500 14v3" stroke="#c06008" strokeWidth="2" />
        </Icon>
      </StatusButton>
      <StatusButton label="Автомасштаб">
        <Icon w={16}>
          <path d="M9 1.500l2 5-1 2 5.500 6-5.500-3-1-2-1 2-5.500 3 5.500-6-1-2z" fill="#bbb" stroke="#777" />
          <path d="M1 5h5M4 2v3" stroke="#777" />
        </Icon>
      </StatusButton>
      <div className="w-[6px] border-l border-[#555]" />
      <StatusButton label="Рабочее пространство">
        <Icon w={16}>
          <Gear color="#222" fill="#fff" />
        </Icon>
      </StatusButton>
      <StatusButton label="Блокировка панелей">
        <Icon w={16}>
          <path d="M8.500 7V4c0-3.500 5-3.500 5 0v2" strokeWidth="1.500" stroke="#222" />
          <path d="M1.500 7.500h9v7h-9z" fill="#fff" stroke="#222" />
          <path d="M6 9.500v3" stroke="#222" />
        </Icon>
      </StatusButton>
      <StatusButton label="Аппаратное ускорение">
        <Icon w={18}>
          <path d="M2.500 4.500h10v6h-10z" fill="#8fa3b8" stroke="#333" />
          <path d="M4 2.500h8M4 12.500h6" strokeDasharray="1 1" strokeWidth="2" />
          <circle cx="13.500" cy="10" r="2.500" fill="#fff" stroke="#f08a10" strokeWidth="1.500" />
          <path d="M13.500 13v4" stroke="#c06008" strokeWidth="2" />
        </Icon>
      </StatusButton>
      <button
        aria-label="Изолировать объекты"
        className="flex h-[21px] w-[31px] items-center justify-center border border-[#333] bg-gradient-to-b from-[#8a8a8a] to-[#b5b5b5]"
      >
        <Icon w={16} h={18}>
          <Bulb x={3} y={1.5} />
        </Icon>
      </button>
      <button aria-label="Меню строки состояния" className="flex w-3 items-center justify-center bg-[#a8a8a8]">
        <Arrow color="#000" />
      </button>
      <StatusButton label="Очистить экран">
        <Icon w={16}>
          <path d="M1.500 1.500h13v13h-13z" fill="#fff" stroke="#333" />
          <path d="M2 3h12" stroke="#666" strokeWidth="2" />
        </Icon>
      </StatusButton>
    </footer>
  );
}

export default function App() {
  return (
    <div className="flex h-screen min-h-[600px] flex-col overflow-hidden bg-[#a5a5a5] font-['Open_Sans','Noto_Sans',sans-serif] text-[12px] leading-4">
      <Header />
      <Ribbon />
      <Canvas />
      <LayoutTabs />
      <CommandLine />
      <StatusBar />
    </div>
  );
}
